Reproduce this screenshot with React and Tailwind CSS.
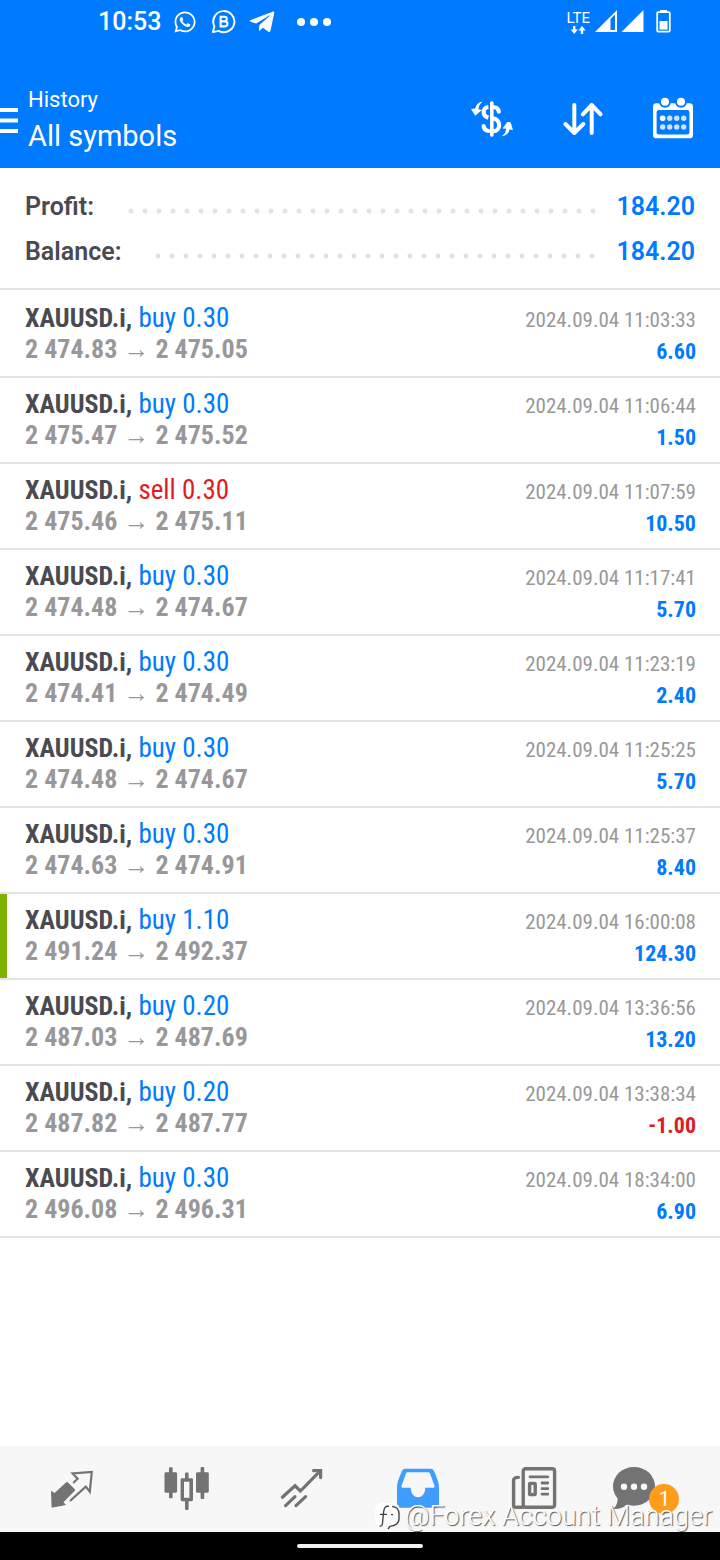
import { useState } from "react";
import { FaTelegramPlane, FaWhatsapp } from "react-icons/fa";

const summary = [
  { label: "Profit:", value: "184.20" },
  { label: "Balance:", value: "184.20" },
];

const deals = [
  { side: "buy", volume: "0.30", open: "2 474.83", close: "2 475.05", time: "2024.09.04 11:03:33", profit: "6.60" },
  { side: "buy", volume: "0.30", open: "2 475.47", close: "2 475.52", time: "2024.09.04 11:06:44", profit: "1.50" },
  { side: "sell", volume: "0.30", open: "2 475.46", close: "2 475.11", time: "2024.09.04 11:07:59", profit: "10.50" },
  { side: "buy", volume: "0.30", open: "2 474.48", close: "2 474.67", time: "2024.09.04 11:17:41", profit: "5.70" },
  { side: "buy", volume: "0.30", open: "2 474.41", close: "2 474.49", time: "2024.09.04 11:23:19", profit: "2.40" },
  { side: "buy", volume: "0.30", open: "2 474.48", close: "2 474.67", time: "2024.09.04 11:25:25", profit: "5.70" },
  { side: "buy", volume: "0.30", open: "2 474.63", close: "2 474.91", time: "2024.09.04 11:25:37", profit: "8.40" },
  { side: "buy", volume: "1.10", open: "2 491.24", close: "2 492.37", time: "2024.09.04 16:00:08", profit: "124.30", marked: true },
  { side: "buy", volume: "0.20", open: "2 487.03", close: "2 487.69", time: "2024.09.04 13:36:56", profit: "13.20" },
  { side: "buy", volume: "0.20", open: "2 487.82", close: "2 487.77", time: "2024.09.04 13:38:34", profit: "-1.00" },
  { side: "buy", volume: "0.30", open: "2 496.08", close: "2 496.31", time: "2024.09.04 18:34:00", profit: "6.90" },
];

function StatusBar() {
  return (
    <div className="flex h-11 items-center justify-between pr-12 pl-[98px]">
      <div className="flex items-center">
        <span className="text-[25px] leading-8 font-medium">10:53</span>
        <FaWhatsapp className="ml-3 size-6" />
        <svg className="ml-[14px] size-[25px]" viewBox="0 1 26 26">
          <path
            d="M2 24 L3.5 18 A11 11 0 1 1 8 22.7 Z"
            fill="none"
            stroke="white"
            strokeWidth="2"
            strokeLinejoin="round"
          />
          <path
            d="M10 8 H14 A2.4 2.4 0 0 1 14 12.8 H10 Z M10 12.8 H14.5 A2.6 2.6 0 0 1 14.5 18 H10 Z"
            fill="none"
            stroke="white"
            strokeWidth="2.2"
          />
        </svg>
        <FaTelegramPlane className="ml-3 size-7" />
        <svg className="ml-5 h-2 w-9" viewBox="0 0 36 8" fill="white">
          <circle cx="5" cy="4" r="4" />
          <circle cx="18" cy="4" r="4" />
          <circle cx="31" cy="4" r="4" />
        </svg>
      </div>
      <div className="flex items-center">
        <div className="flex flex-col items-center">
          <span className="text-[15px] leading-4">LTE</span>
          <svg className="h-2 w-4" viewBox="0 0 16 8" fill="white">
            <path d="M3 0 h2.4 v3.6 h2.4 L4.2 8 L0.6 3.6 H3 Z" />
            <path d="M10.8 8 h2.4 V4.4 h2.4 L12 0 L8.4 4.4 h2.4 Z" />
          </svg>
        </div>
        <svg className="ml-1 h-6 w-[50px]" viewBox="0 1 50 24" fill="white">
          <path fillRule="evenodd" d="M1 23 L23 1 V23 Z M16.5 10 V21 H21 V5.5 Z" />
          <path d="M27.5 23 L49.5 1 V23 Z" />
        </svg>
        <svg className="ml-3 h-6 w-4" viewBox="0 1 16 24">
          <path d="M4 1 H11 V3 H4 Z" fill="white" />
          <rect x="1.2" y="3.2" width="12.6" height="19.4" rx="1" fill="none" stroke="white" strokeWidth="1.8" />
          <path d="M3.5 12 H11.5 V20.6 H3.5 Z" fill="white" />
        </svg>
      </div>
    </div>
  );
}

function CurrencyIcon() {
  return (
    <svg className="size-12" viewBox="0 0 48 48" fill="white">
      <path d="M14.6 5.6 C10.5 6.4 8 8.6 7.2 12.6 L3 12.9 L7.2 19.8 L13.9 14 L10.6 13.2 C10.6 10.2 12 7.8 14.6 5.6 Z" />
      <path d="M33.6 40.2 C38 39.8 41 37 41.6 33.4 L45 34 L42.6 26.6 C41 25.8 39 26 38.4 27.2 L34.6 32.6 L38 32.8 C38 35.8 36.4 38.4 33.6 40.2 Z" />
      <rect x="22" y="5.3" width="3.6" height="35.4" rx="1.6" />
      <g fill="none" stroke="white" strokeWidth="4.2">
        <path d="M20.4 11 C14.2 11.8 14 20 20.4 21.6" />
        <path d="M25 11 C28.4 11 30.6 13 30.8 15.6" strokeLinecap="round" />
        <path d="M25 22.4 C33.4 23.6 33 35 25 35.2" />
        <path d="M15.6 30 C16 33 17.6 34.6 20.4 35" strokeLinecap="round" />
      </g>
    </svg>
  );
}

function SortIcon() {
  return (
    <svg
      className="size-12"
      viewBox="0 0 48 48"
      fill="none"
      stroke="white"
      strokeWidth="4"
      strokeLinecap="round"
      strokeLinejoin="round"
    >
      <path d="M15.3 9 V37 M6.4 28 L15.3 37 L24.3 28" />
      <path d="M32.7 37 V9 M23.8 18.4 L32.7 9 L41.6 18.4" />
    </svg>
  );
}

function CalendarIcon() {
  return (
    <svg className="size-12" viewBox="1 2 48 48">
      <rect x="4" y="9.3" width="40" height="35" rx="3.4" fill="white" />
      <rect x="7.6" y="16" width="32.8" height="24.6" rx="2.4" fill="#007aff" />
      <g fill="white" stroke="#007aff" strokeWidth="2">
        <circle cx="16" cy="7.8" r="5" />
        <circle cx="32" cy="7.8" r="5" />
      </g>
      <g fill="#cce4ff">
        <circle cx="13.7" cy="24.3" r="2.8" fill="white" />
        <circle cx="20.7" cy="24.3" r="2.7" />
        <circle cx="27.7" cy="24.3" r="2.7" />
        <circle cx="34.7" cy="24.3" r="2.7" />
        <circle cx="13.7" cy="33" r="2.7" />
        <circle cx="20.7" cy="33" r="2.7" />
        <circle cx="27.7" cy="33" r="2.7" />
        <circle cx="34.7" cy="33" r="2.7" />
      </g>
    </svg>
  );
}

function Header() {
  return (
    <header className="bg-[#007aff] text-white">
      <StatusBar />
      <div className="flex items-center pt-7 pr-[22px]">
        <button type="button" aria-label="Menu" className="flex h-24 items-center">
          <svg className="h-[26px] w-[18px]" viewBox="0 0 18 26" fill="white">
            <path d="M0 1 H18 V5 H0 Z M0 11.4 H18 V15.4 H0 Z M0 22 H18 V26 H0 Z" />
          </svg>
        </button>
        <div className="ml-[10px] flex-1">
          <p className="text-[22px] leading-8">History</p>
          <h1 className="text-[29px] leading-10">All symbols</h1>
        </div>
        <div className="flex items-center gap-[43px]">
          <button type="button" aria-label="Filter by symbol">
            <CurrencyIcon />
          </button>
          <button type="button" aria-label="Sort">
            <SortIcon />
          </button>
          <button type="button" aria-label="Period">
            <CalendarIcon />
          </button>
        </div>
      </div>
    </header>
  );
}

function Deal({ deal }) {
  return (
    <li
      className={`flex h-[86px] items-center justify-between border-b-2 border-[#e4e4e5] pr-6 ${
        deal.marked ? "pl-0" : "pl-[25px]"
      }`}
    >
      {deal.marked && <span className="mr-[18px] w-[7px] self-stretch bg-[#7fb200]" />}
      <div className="flex-1 text-[27px] leading-[31px]">
        <p>
          <span className="text-[26px] font-bold text-[#4a4a50]">XAUUSD.i,</span>{" "}
          <span className={deal.side === "sell" ? "text-[#e01b22]" : "text-[#007aff]"}>
            {deal.side} {deal.volume}
          </span>
        </p>
        <p className="text-[26px] font-bold text-[#98989b]">
          {deal.open} <span className="font-normal">→</span> {deal.close}
        </p>
      </div>
      <div className="pt-1 text-right leading-[31px]">
        <p className="text-[21px] text-[#98989b]">{deal.time}</p>
        <p
          className={`text-[22px] font-bold ${
            deal.profit.startsWith("-") ? "text-[#e01b22]" : "text-[#007aff]"
          }`}
        >
          {deal.profit}
        </p>
      </div>
    </li>
  );
}

const tabs = [
  {
    name: "Quotes",
    icon: (
      <svg className="size-12" viewBox="0 0 48 48">
        <path
          d="M3 26.7 L6.6 29 L18 18.4 Q19 17.6 20 18.4 L26.8 25.2 Q27.4 26 26.8 26.8 L15.4 38.2 L18 41 L3.6 43.8 Z"
          fill="#737373"
        />
        <path
          d="M22 37 L37.8 22.6 L41.8 27.6 L43.8 8 L24.6 9.5 L29.6 14.8 L25.2 19"
          fill="none"
          stroke="#737373"
          strokeWidth="2.2"
        />
      </svg>
    ),
  },
  {
    name: "Charts",
    icon: (
      <svg className="size-12" viewBox="0 0 48 48" fill="#737373">
        <rect x="1.5" y="8.3" width="12.6" height="20.4" rx="1.4" />
        <rect x="6" y="3.2" width="3.6" height="31" rx="1" />
        <path
          fillRule="evenodd"
          d="M19 14.2 H28.6 Q30 14.2 30 15.6 V35.8 Q30 37.2 28.6 37.2 H19 Q17.6 37.2 17.6 35.8 V15.6 Q17.6 14.2 19 14.2 Z M21 17.8 V33.8 H26.4 V17.8 Z"
        />
        <rect x="22" y="8.4" width="3.6" height="7" rx="1" />
        <rect x="22" y="36" width="3.6" height="10" rx="1" />
        <rect x="33" y="8.3" width="12.8" height="20.4" rx="1.4" />
        <rect x="37.6" y="3" width="3.6" height="32" rx="1" />
      </svg>
    ),
  },
  {
    name: "Trade",
    icon: (
      <svg
        className="size-12"
        viewBox="0 0 48 48"
        fill="none"
        stroke="#737373"
        strokeWidth="3.2"
        strokeLinecap="round"
      >
        <path d="M4.4 33.2 L17 21.8 L22.4 27 L41.5 7.6" />
        <path d="M35.6 6.6 H42.6 V13.6" />
        <path d="M17 32.6 L7.6 41.6 M27.6 32.6 L18 41.6" />
      </svg>
    ),
  },
  {
    name: "History",
    icon: (
      <svg className="size-12" viewBox="0 0 48 48" fill="#409cff">
        <path
          fillRule="evenodd"
          d="M11.4 4.7 H36.6 Q39 4.7 40 7 Q45 18 45 23 V41 Q45 43.7 42.3 43.7 H5.7 Q3 43.7 3 41 V23 Q3 18 8 7 Q9 4.7 11.4 4.7 Z M13.6 8.2 Q12.6 8.2 12 9.6 L7.4 22 Q7 23.8 8.6 23.8 H16.8 C16.8 29 19.4 33.2 24 33.2 C28.6 33.2 31.2 29 31.2 23.8 H39.4 Q41 23.8 40.6 22 L36 9.6 Q35.4 8.2 34.4 8.2 Z"
        />
      </svg>
    ),
  },
  {
    name: "News",
    icon: (
      <svg className="size-12" viewBox="0 0 48 48" fill="none" stroke="#737373" strokeWidth="3.4">
        <rect x="14.2" y="4.8" width="31.4" height="38.4" rx="2.4" />
        <path d="M14 43.2 H6.6 Q4.6 43.2 4.6 41 V16 Q4.8 13.6 9.4 13.4" strokeLinecap="round" />
        <path d="M21 12.8 H38.8 M33 19 H38.8 M33 24.7 H38.8 M33 30.2 H38.8" strokeLinecap="round" strokeWidth="2.8" />
        <rect x="20.6" y="19.4" width="5.6" height="11.2" rx="0.6" />
      </svg>
    ),
  },
  {
    name: "Messages",
    badge: "1",
    icon: (
      <svg className="h-12 w-[70px]" viewBox="0 0 70 48">
        <ellipse cx="21" cy="22.3" rx="21" ry="19.4" fill="#737373" />
        <path d="M4.6 33 C5 38 3.6 42 0.2 45 C6 45.4 11 43.6 15 40 Z" fill="#737373" />
        <g fill="#f7f7f7">
          <circle cx="11" cy="22.7" r="3.2" />
          <circle cx="21" cy="22.7" r="3.2" />
          <circle cx="31" cy="22.7" r="3.2" />
        </g>
      </svg>
    ),
  },
];

function Watermark() {
  return (
    <div className="absolute right-2 bottom-7 flex items-center gap-[2px] text-white [text-shadow:1px_1px_1px_#555]">
      <svg className="size-7" viewBox="0 0 28 28">
        <rect x="0" y="1" width="25" height="23" rx="7" fill="white" />
        <path
          d="M14 4.4 C10.4 3.4 9 6 8.6 10 L7.4 22 Q7 24.6 4.6 24 M5 12.4 H12 M17 4.4 Q24 5 24 12 V17 Q24 23 15 24.4 L13 27 M16 12.6 h2"
          fill="none"
          stroke="#444444"
          strokeWidth="1.4"
        />
      </svg>
      <span className="text-[27px] leading-8 font-light">@Forex Account Manager</span>
    </div>
  );
}

function App() {
  const [active, setActive] = useState("History");

  return (
    <div className="relative flex min-h-screen flex-col bg-white font-[Roboto,sans-serif]">
      <Header />
      <main className="flex-1">
        <dl className="border-b-2 border-[#e4e4e5] pt-4 pr-[25px] pb-[14px] pl-[25px] text-[25px] leading-[45px] font-semibold">
          {summary.map((item) => (
            <div key={item.label} className="flex items-center">
              <dt className="text-[#4a4a50]">{item.label}</dt>
              <span className="mt-2 mr-[15px] ml-[30px] h-[14px] flex-1 bg-[radial-gradient(circle,#e2e2e3_2px,transparent_3px)] bg-[length:14px_14px]" />
              <dd className="text-[#007aff]">{item.value}</dd>
            </div>
          ))}
        </dl>
        <ul className="pt-[2px] font-['Roboto_Condensed','Liberation_Sans_Narrow',Roboto,sans-serif]">
          {deals.map((deal) => (
            <Deal key={deal.time} deal={deal} />
          ))}
        </ul>
      </main>
      <nav className="flex h-[86px] items-center bg-[#f7f7f7] px-[14px] pb-[2px]">
        {tabs.map((tab) => (
          <button
            key={tab.name}
            type="button"
            aria-label={tab.name}
            aria-pressed={tab.name === active}
            onClick={() => setActive(tab.name)}
            className="flex flex-1 justify-center"
          >
            <span className="relative">
              {tab.icon}
              {tab.badge && (
                <span className="absolute top-5 right-1 size-[30px] rounded-full bg-[#ff9d1b] text-center text-xl leading-[30px] text-white">
                  {tab.badge}
                </span>
              )}
            </span>
          </button>
        ))}
      </nav>
      <div className="flex h-7 items-center justify-center bg-black">
        <span className="h-1 w-[126px] rounded-full bg-[#f0f0f0]" />
      </div>
      <Watermark />
    </div>
  );
}

export default App;
